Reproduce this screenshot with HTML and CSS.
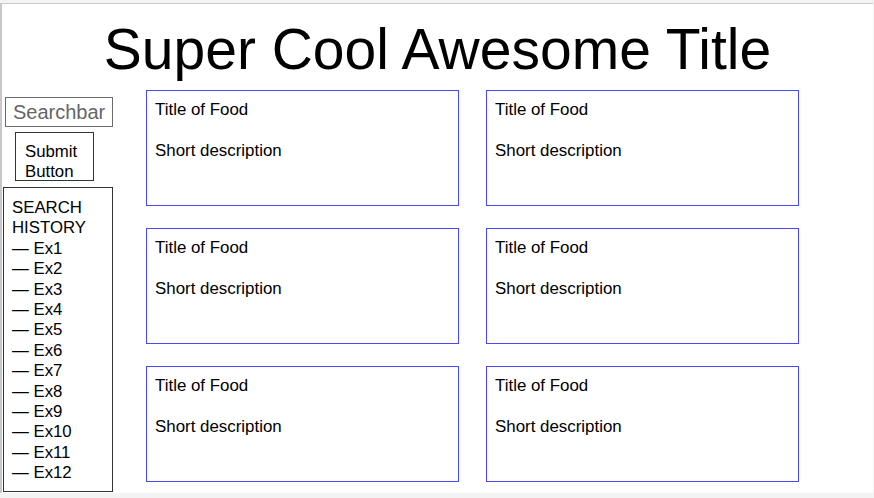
FILE: index.html
```html
<!DOCTYPE html>
<html lang="en">
<head>
<meta charset="utf-8">
<title>Super Cool Awesome Title</title>
<link rel="stylesheet" href="styles.css">
</head>
<body>
<div class="frame">
  <h1 class="title">Super Cool Awesome Title</h1>
  <div class="main">
    <aside class="sidebar">
      <div class="searchbar">Searchbar</div>
      <div class="submit">Submit<br>Button</div>
      <div class="history">
        SEARCH<br>HISTORY<br>
        — Ex1<br>— Ex2<br>— Ex3<br>— Ex4<br>— Ex5<br>— Ex6<br>— Ex7<br>— Ex8<br>— Ex9<br>— Ex10<br>— Ex11<br>— Ex12
      </div>
    </aside>
    <section class="cards">
      <div class="card"><div class="card-title">Title of Food</div><div class="card-desc">Short description</div></div>
      <div class="card"><div class="card-title">Title of Food</div><div class="card-desc">Short description</div></div>
      <div class="card"><div class="card-title">Title of Food</div><div class="card-desc">Short description</div></div>
      <div class="card"><div class="card-title">Title of Food</div><div class="card-desc">Short description</div></div>
      <div class="card"><div class="card-title">Title of Food</div><div class="card-desc">Short description</div></div>
      <div class="card"><div class="card-title">Title of Food</div><div class="card-desc">Short description</div></div>
    </section>
  </div>
</div>
</body>
</html>
```

FILE: styles.css
```css
html, body {
  margin: 0;
  padding: 0;
  background: #f3f3f3;
}
body {
  font-family: "Liberation Sans", Arial, sans-serif;
  color: #000;
}
.frame {
  margin-top: 3px;
  width: 873px;
  height: 490px;
  box-sizing: border-box;
  border-top: 1px solid #c8c8cc;
  border-left: 2px solid #c8c8cc;
  background: #fff;
  overflow: hidden;
}
.title {
  margin: 11px 0 6px;
  font-size: 57px;
  font-weight: normal;
  line-height: 69px;
  text-align: center;
}
.main {
  display: flex;
  padding-left: 1px;
  gap: 32px;
}
.sidebar {
  width: 111px;
  display: flex;
  flex-direction: column;
  align-items: flex-start;
}
.searchbar {
  margin: 7px 0 0 2px;
  width: 108px;
  height: 30px;
  box-sizing: border-box;
  border: 1px solid #6a6a6a;
  padding-left: 7px;
  font-size: 20px;
  line-height: 28px;
  color: #666;
}
.submit {
  margin: 5px 0 0 12px;
  width: 79px;
  height: 49px;
  box-sizing: border-box;
  border: 1px solid #333;
  padding: 9px 0 0 9px;
  font-size: 16.8px;
  line-height: 20px;
}
.history {
  margin-top: 6px;
  width: 110px;
  height: 305px;
  box-sizing: border-box;
  border: 1px solid #333;
  padding: 10px 0 0 8px;
  font-size: 16.8px;
  line-height: 20.4px;
}
.cards {
  display: grid;
  grid-template-columns: 313px 313px;
  grid-auto-rows: 116px;
  column-gap: 27px;
  row-gap: 22px;
}
.card {
  border: 1px solid #4848ff;
  padding: 9px 8px 8px;
  box-sizing: border-box;
  font-size: 16.9px;
  line-height: 20px;
}
.card-desc {
  margin-top: 21px;
}
```
